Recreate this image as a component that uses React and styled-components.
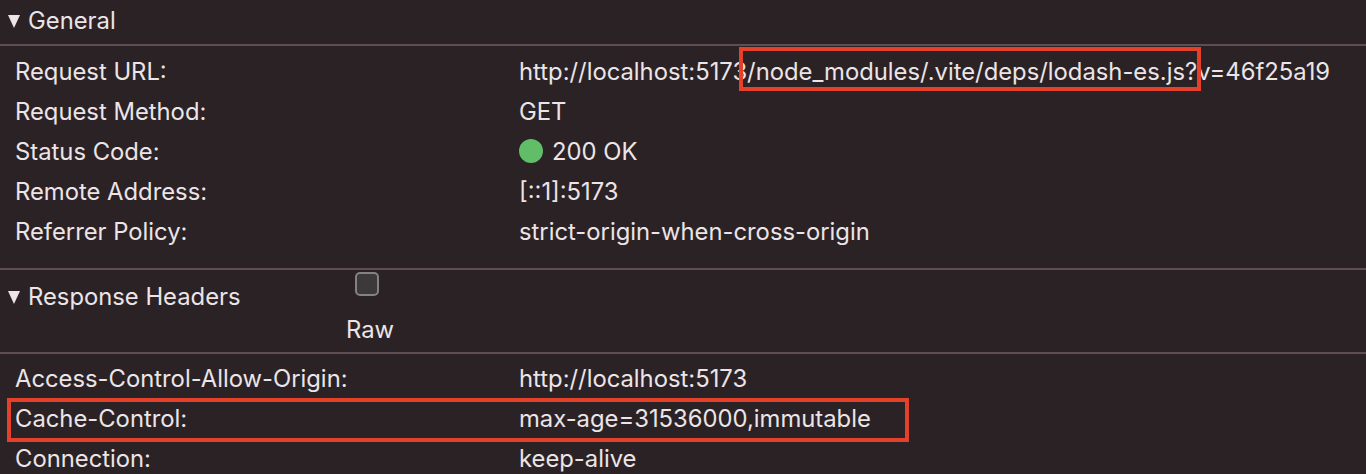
import React from 'react';
import styled, { createGlobalStyle } from 'styled-components';

const Global = createGlobalStyle`
  html, body {
    margin: 0;
    padding: 0;
    background: #2a2225;
  }
  body {
    font-family: Inter, "Liberation Sans", Arial, sans-serif;
    color: #ece4e6;
    -webkit-font-smoothing: antialiased;
  }
`;

const Panel = styled.div`
  width: 1366px;
  height: 474px;
  overflow: hidden;
  background: #2a2225;
  font-size: 23.8px;
  line-height: 29px;
`;

const Section = styled.section`
  border-bottom: 2px solid #5e4d52;
  &:last-child {
    border-bottom: none;
  }
`;

const Header = styled.div`
  display: flex;
  align-items: flex-start;
  height: ${(p) => p.$height}px;
  border-bottom: 2px solid #5e4d52;
  box-sizing: border-box;
`;

const Title = styled.div`
  display: flex;
  align-items: center;
  gap: 8px;
  padding-left: 8px;
  height: 40px;
  margin-top: ${(p) => p.$top || 0}px;
  width: 338px;
  flex-shrink: 0;
`;

const Triangle = styled.span`
  width: 0;
  height: 0;
  border-left: 6.5px solid transparent;
  border-right: 6.5px solid transparent;
  border-top: 13px solid #ece4e6;
  margin-top: 2px;
`;

const RawToggle = styled.label`
  display: flex;
  flex-direction: column;
  align-items: center;
  gap: 19px;
  margin-top: 2px;
`;

const Checkbox = styled.span`
  width: 24px;
  height: 24px;
  box-sizing: border-box;
  border: 2px solid #858083;
  border-radius: 5px;
  background: #3b393a;
  margin-right: 6px;
`;

const Rows = styled.div`
  padding: ${(p) => p.$pad};
`;

const Row = styled.div`
  position: relative;
  display: grid;
  grid-template-columns: 504px 1fr;
  align-items: center;
  height: 40px;
  padding-left: 15px;
  white-space: nowrap;
`;

const Value = styled.span`
  display: flex;
  align-items: center;
  gap: 9px;
`;

const Dot = styled.span`
  width: 24px;
  height: 24px;
  border-radius: 50%;
  background: #62bd69;
  display: inline-block;
`;

const Mark = styled.span`
  position: relative;
  &::after {
    content: '';
    position: absolute;
    left: -8px;
    right: -4px;
    top: -10px;
    bottom: -5px;
    border: 4px solid #e5402a;
  }
`;

const RowBox = styled.span`
  position: absolute;
  left: 7px;
  top: 0;
  width: 902px;
  height: 44px;
  box-sizing: border-box;
  border: 4px solid #e5402a;
  pointer-events: none;
`;

const general = [
  ['Request Method:', 'GET'],
  ['Status Code:', 'status'],
  ['Remote Address:', '[::1]:5173'],
  ['Referrer Policy:', 'strict-origin-when-cross-origin'],
];

const response = [
  ['Access-Control-Allow-Origin:', 'http://localhost:5173'],
  ['Cache-Control:', 'max-age=31536000,immutable', true],
  ['Connection:', 'keep-alive'],
];

export default function App() {
  return (
    <Panel>
      <Global />
      <Section>
        <Header $height={46}>
          <Title $top={0}>
            <Triangle />
            General
          </Title>
        </Header>
        <Rows $pad="5px 0 17px">
          <Row>
            <span>Request URL:</span>
            <span>
              http://localhost:5173<Mark>/node_modules/.vite/deps/lodash-es.js?</Mark>v=46f25a19
            </span>
          </Row>
          {general.map(([label, value]) => (
            <Row key={label}>
              <span>{label}</span>
              {value === 'status' ? (
                <Value>
                  <Dot />
                  200 OK
                </Value>
              ) : (
                <Value>{value}</Value>
              )}
            </Row>
          ))}
        </Rows>
      </Section>
      <Section>
        <Header $height={84}>
          <Title $top={6}>
            <Triangle />
            Response Headers
          </Title>
          <RawToggle>
            <Checkbox />
            Raw
          </RawToggle>
        </Header>
        <Rows $pad="4px 0 0">
          {response.map(([label, value, boxed]) => (
            <Row key={label}>
              {boxed && <RowBox />}
              <span>{label}</span>
              <Value>{value}</Value>
            </Row>
          ))}
        </Rows>
      </Section>
    </Panel>
  );
}
